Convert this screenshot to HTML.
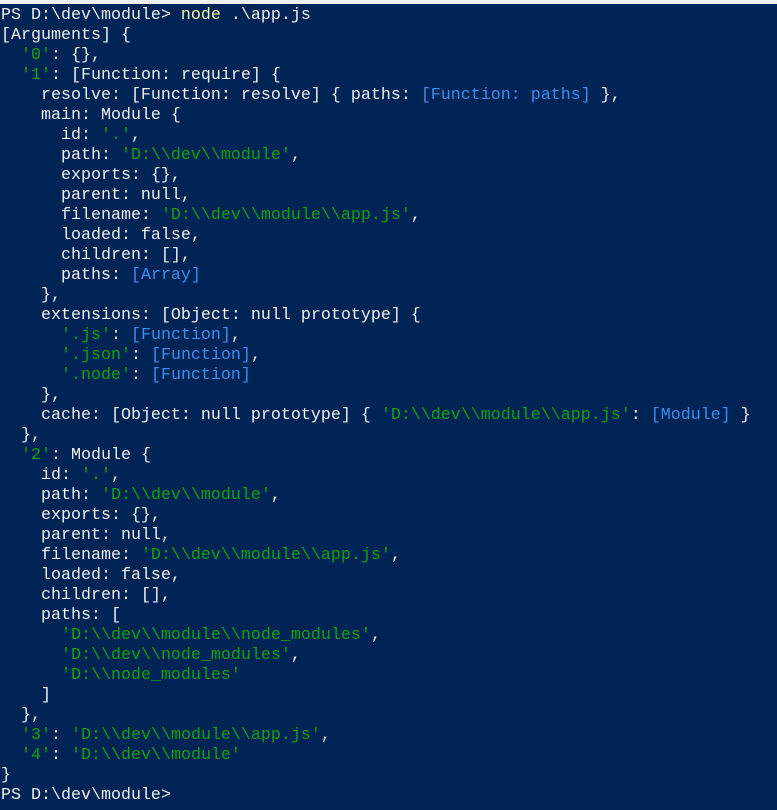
<!DOCTYPE html>
<html><head><meta charset="utf-8"><style>
html,body{margin:0;padding:0;background:#012456;width:777px;height:810px;overflow:hidden}
body{border-top:4px solid #f0f0f0;box-sizing:border-box}
pre{margin:0;padding:2px 0 0 1px;font-family:"Liberation Mono",monospace;font-size:16.67px;line-height:20px;color:#eeeeee;white-space:pre}
.g{color:#13a10e}.b{color:#3b8eea}.y{color:#f9f1a5}
</style></head><body><pre>PS D:\dev\module&gt; <span class="y">node</span> .\app.js
[Arguments] {
  <span class="g">'0'</span>: {},
  <span class="g">'1'</span>: [Function: require] {
    resolve: [Function: resolve] { paths: <span class="b">[Function: paths]</span> },
    main: Module {
      id: <span class="g">'.'</span>,
      path: <span class="g">'D:\\dev\\module'</span>,
      exports: {},
      parent: null,
      filename: <span class="g">'D:\\dev\\module\\app.js'</span>,
      loaded: false,
      children: [],
      paths: <span class="b">[Array]</span>
    },
    extensions: [Object: null prototype] {
      <span class="g">'.js'</span>: <span class="b">[Function]</span>,
      <span class="g">'.json'</span>: <span class="b">[Function]</span>,
      <span class="g">'.node'</span>: <span class="b">[Function]</span>
    },
    cache: [Object: null prototype] { <span class="g">'D:\\dev\\module\\app.js'</span>: <span class="b">[Module]</span> }
  },
  <span class="g">'2'</span>: Module {
    id: <span class="g">'.'</span>,
    path: <span class="g">'D:\\dev\\module'</span>,
    exports: {},
    parent: null,
    filename: <span class="g">'D:\\dev\\module\\app.js'</span>,
    loaded: false,
    children: [],
    paths: [
      <span class="g">'D:\\dev\\module\\node_modules'</span>,
      <span class="g">'D:\\dev\\node_modules'</span>,
      <span class="g">'D:\\node_modules'</span>
    ]
  },
  <span class="g">'3'</span>: <span class="g">'D:\\dev\\module\\app.js'</span>,
  <span class="g">'4'</span>: <span class="g">'D:\\dev\\module'</span>
}
PS D:\dev\module&gt;</pre></body></html>
